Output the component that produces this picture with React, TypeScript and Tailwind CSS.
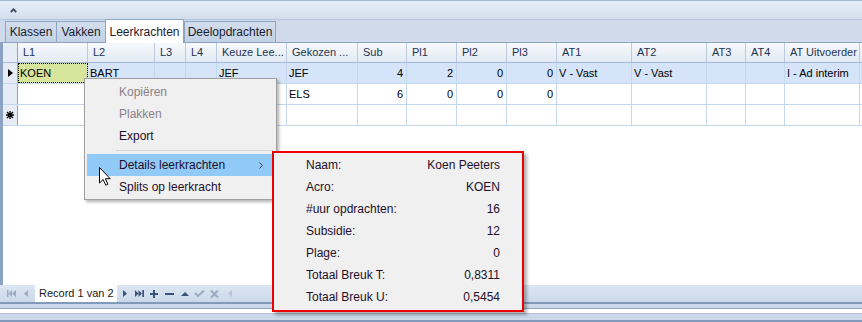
import React from "react";

const cols = [
  { w: "w-[70px]", label: "L1", num: false },
  { w: "w-[67px]", label: "L2", num: false },
  { w: "w-[31px]", label: "L3", num: false },
  { w: "w-[31px]", label: "L4", num: false },
  { w: "w-[70px]", label: "Keuze Lee...", num: false },
  { w: "w-[71px]", label: "Gekozen ...", num: false },
  { w: "w-[49px]", label: "Sub", num: true },
  { w: "w-[50px]", label: "Pl1", num: true },
  { w: "w-[50px]", label: "Pl2", num: true },
  { w: "w-[50px]", label: "Pl3", num: true },
  { w: "w-[75px]", label: "AT1", num: false },
  { w: "w-[75px]", label: "AT2", num: false },
  { w: "w-[39px]", label: "AT3", num: false },
  { w: "w-[39px]", label: "AT4", num: false },
  { w: "w-[75px]", label: "AT Uitvoerder", num: false },
];

const rows = [
  ["KOEN", "BART", "", "", "JEF", "JEF", "4", "2", "0", "0", "V - Vast", "V - Vast", "", "", "I - Ad interim"],
  ["", "", "", "", "", "ELS", "6", "0", "0", "0", "", "", "", "", ""],
  ["", "", "", "", "", "", "", "", "", "", "", "", "", "", ""],
];

const details = [
  ["Naam:", "Koen Peeters"],
  ["Acro:", "KOEN"],
  ["#uur opdrachten:", "16"],
  ["Subsidie:", "12"],
  ["Plage:", "0"],
  ["Totaal Breuk T:", "0,8311"],
  ["Totaal Breuk U:", "0,5454"],
];

const tabs = [
  { label: "Klassen", w: "w-[52px]", active: false },
  { label: "Vakken", w: "w-[50px]", active: false },
  { label: "Leerkrachten", w: "w-[79px]", active: true },
  { label: "Deelopdrachten", w: "w-[92px]", active: false },
];

function Indicator({ kind }: { kind: string }) {
  return (
    <div className="w-[15px] shrink-0 h-full flex items-center justify-center bg-[#e5ecf6] border-r border-[#8ea4c3]">
      {kind === "current" && (
        <svg width="5" height="8" viewBox="0 0 5 8">
          <path d="M0 0 L5 4 L0 8 Z" fill="#000" />
        </svg>
      )}
      {kind === "new" && (
        <svg width="8" height="8" viewBox="0 0 8 8" stroke="#000" strokeWidth="1.3">
          <path d="M4 0 V8 M0 4 H8 M1 1 L7 7 M7 1 L1 7" />
        </svg>
      )}
    </div>
  );
}

function NavBar() {
  const on = "#3a5479";
  const off = "#9aabc2";
  return (
    <div className="h-[17px] flex items-center bg-gradient-to-b from-[#dce6f3] to-[#cbd9ea] [&>svg]:shrink-0">
      <svg className="ml-[7px]" width="9" height="7" viewBox="0 0 9 7" fill={off}>
        <rect x="0" y="0" width="1.5" height="7" />
        <path d="M1.5 3.5 L5 0 V7 Z M5 3.5 L9 0 V7 Z" />
      </svg>
      <svg className="ml-[8px]" width="4" height="7" viewBox="0 0 4 7" fill={off}>
        <path d="M0 3.5 L4 0 V7 Z" />
      </svg>
      <div className="ml-[7px] w-[82px] shrink-0 h-full bg-white flex items-center pl-[4px] text-[11px] text-[#1a1a1a] whitespace-nowrap">
        Record 1 van 2
      </div>
      <svg className="ml-[6px]" width="4" height="7" viewBox="0 0 4 7" fill={on}>
        <path d="M0 0 L4 3.5 L0 7 Z" />
      </svg>
      <svg className="ml-[8px]" width="9" height="7" viewBox="0 0 9 7" fill={on}>
        <path d="M0 0 L3.5 3.5 L0 7 Z M3.5 0 L7 3.5 L3.5 7 Z" />
        <rect x="7.3" y="0" width="1.7" height="7" />
      </svg>
      <svg className="ml-[6px]" width="8" height="8" viewBox="0 0 8 8" fill={on}>
        <rect x="3" y="0" width="2" height="8" />
        <rect x="0" y="3" width="8" height="2" />
      </svg>
      <svg className="ml-[7px]" width="9" height="2" viewBox="0 0 9 2" fill={on}>
        <rect x="0" y="0" width="9" height="2" />
      </svg>
      <svg className="ml-[7px]" width="8" height="4" viewBox="0 0 8 4" fill={on}>
        <path d="M0 4 L4 0 L8 4 Z" />
      </svg>
      <svg className="ml-[5px]" width="11" height="7" viewBox="0 0 11 7" fill="none" stroke={off} strokeWidth="2">
        <path d="M1 3 L4 6 L10 0.5" />
      </svg>
      <svg className="ml-[5px]" width="9" height="8" viewBox="0 0 9 8" fill="none" stroke={off} strokeWidth="2">
        <path d="M1 0.5 L8 7.5 M8 0.5 L1 7.5" />
      </svg>
      <svg className="ml-[9px]" width="4" height="7" viewBox="0 0 4 7" fill="#b8c5d6">
        <path d="M0 3.5 L4 0 V7 Z" />
      </svg>
    </div>
  );
}

function ContextMenu() {
  const item = "h-[22px] flex items-center pl-[32px] ml-[2px] mr-[4px]";
  return (
    <div className="absolute left-[84px] top-[78px] w-[193px] h-[122px] bg-[#f0f0f0] border border-[#a0a0a0] shadow-[2px_2px_3px_rgba(0,0,0,0.3)] pt-[2px] text-[12px] font-['Liberation_Sans',Arial,sans-serif]">
      <div className={`${item} text-[#8a8088]`}>Kopiëren</div>
      <div className={`${item} text-[#8a8088]`}>Plakken</div>
      <div className={`${item} text-[#1e0f2a]`}>Export</div>
      <div className="h-[7px] flex items-center pl-[31px] pr-[3px]">
        <div className="h-px w-full bg-[#d5d5d5]" />
      </div>
      <div className={`${item} bg-[#91c9f7] text-[#1e0f2a] justify-between pr-[9px]`}>
        <span>Details leerkrachten</span>
        <svg width="4" height="7" viewBox="0 0 4 7" fill="none" stroke="#444" strokeWidth="1">
          <path d="M0.5 0.5 L3.5 3.5 L0.5 6.5" />
        </svg>
      </div>
      <div className={`${item} text-[#1e0f2a]`}>Splits op leerkracht</div>
    </div>
  );
}

function DetailsPopup() {
  return (
    <div className="absolute left-[272px] top-[151px] w-[252px] h-[161px] bg-[#f0f0f0] border-2 border-[#ee0000] shadow-[3px_3px_3px_rgba(0,0,0,0.3)] pt-[1px] text-[12px] text-[#1e0f2a] font-['Liberation_Sans',Arial,sans-serif]">
      {details.map(([k, v]) => (
        <div key={k} className="h-[22px] flex items-center justify-between pl-[32px] pr-[22px]">
          <span>{k}</span>
          <span>{v}</span>
        </div>
      ))}
    </div>
  );
}

export default function App() {
  return (
    <div className="relative w-[862px] h-[322px] overflow-hidden bg-white font-['Liberation_Sans',Arial,sans-serif] text-[11px]">
      {/* collapse bar */}
      <div className="h-[20px] flex items-center border-t border-[#a5b8d1] border-b border-b-[#b6c6dc] bg-gradient-to-b from-[#e6edf7] to-[#d3deed] pl-[10px]">
        <svg width="7" height="5" viewBox="0 0 7 5" fill="none" stroke="#3d4a5c" strokeWidth="1.8">
          <path d="M0.8 4.2 L3.5 1.2 L6.2 4.2" />
        </svg>
      </div>

      {/* tabs */}
      <div className="h-[23px] flex items-end pl-[5px] bg-[#cfdaea] border-b border-[#8ea4c3]">
        {tabs.map((t) =>
          t.active ? (
            <div
              key={t.label}
              className={`${t.w} h-[24px] -mb-px bg-white border border-b-0 border-[#8ea4c3] flex items-center justify-center text-[12px] text-[#1b2230]`}
            >
              {t.label}
            </div>
          ) : (
            <div
              key={t.label}
              className={`${t.w} h-[21px] bg-gradient-to-b from-[#d3deed] to-[#c2d1e5] border border-b-0 border-[#8ea4c3] -mr-px flex items-center justify-center text-[12px] text-[#1b2230]`}
            >
              {t.label}
            </div>
          )
        )}
      </div>

      {/* grid */}
      <div className="h-[242px] border-l-[3px] border-[#8ba2c2] bg-white">
        <div className="h-[20px] flex border-b border-[#a6bad4] bg-gradient-to-b from-[#f7f9fd] to-[#e3eaf4] text-[#1e3350]">
          <Indicator kind="" />
          {cols.map((c) => (
            <div key={c.label} className={`${c.w} shrink-0 border-r border-[#bccbe0] flex items-center pl-[5px] whitespace-nowrap overflow-hidden`}>
              {c.label}
            </div>
          ))}
        </div>
        {rows.map((r, ri) => (
          <div key={ri} className={`h-[21px] flex border-b border-[#c5d7ef] ${ri === 0 ? "bg-[#d5e4f8]" : "bg-white"}`}>
            <Indicator kind={ri === 0 ? "current" : ri === 2 ? "new" : ""} />
            {cols.map((c, ci) => (
              <div
                key={c.label}
                className={`${c.w} shrink-0 border-r border-[#c5d7ef] flex items-center whitespace-nowrap overflow-hidden text-black ${
                  c.num ? "justify-end pr-[3px]" : "pl-[2px]"
                } ${ri === 0 && ci === 0 ? "bg-[#d6e49c] outline-1 outline-dotted outline-black -outline-offset-1" : ""}`}
              >
                {r[ci]}
              </div>
            ))}
          </div>
        ))}
      </div>

      <NavBar />

      {/* bottom frame lines */}
      <div className="h-[2px] bg-[#8199bb]" />
      <div className="h-[4px] bg-[#cdd9e8]" />
      <div className="h-px bg-[#8aa1c1]" />
      <div className="h-[4px] bg-white" />
      <div className="h-px bg-[#b3c1d4]" />
      <div className="h-[6px] bg-[#ccd8e9]" />
      <div className="h-[2px] bg-[#8199bb]" />

      <ContextMenu />
      <DetailsPopup />

      {/* mouse pointer */}
      <svg className="absolute left-[99px] top-[167px]" width="12" height="19" viewBox="0 0 12 19">
        <path d="M0.5 0.5 L0.5 16 L4.2 12.5 L6.7 18.2 L8.8 17.3 L6.4 11.7 L11.2 11.7 Z" fill="#fff" stroke="#000" strokeWidth="1" strokeLinejoin="miter" />
      </svg>
    </div>
  );
}
